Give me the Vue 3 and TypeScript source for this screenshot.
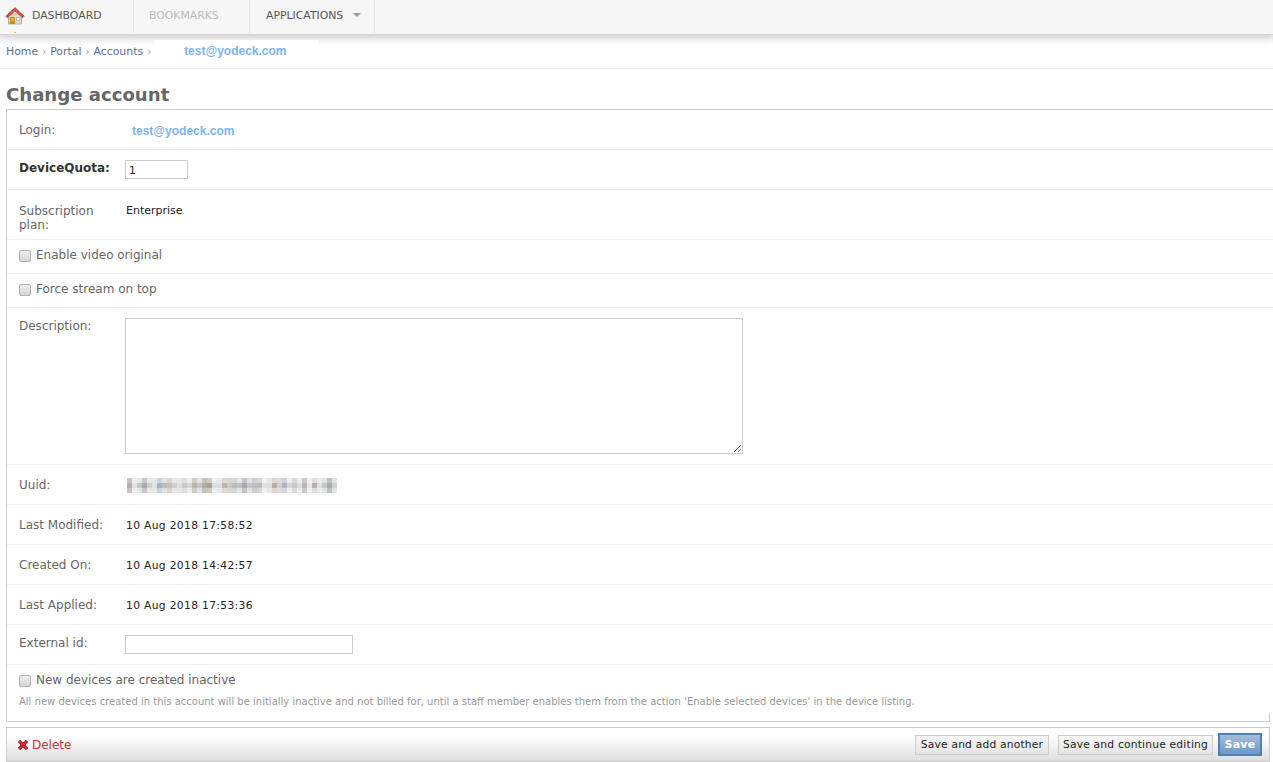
<script setup lang="ts">
const meta = [
  { label: 'Last Modified:', value: '10 Aug 2018 17:58:52' },
  { label: 'Created On:', value: '10 Aug 2018 14:42:57' },
  { label: 'Last Applied:', value: '10 Aug 2018 17:53:36' },
]

const mid = [
  '#b4afb3', '#e2e1e0', '#c4c8c8', '#a9adad', '#d2d2cc', '#dde1e3', '#a4b4c0', '#b9bdbf', '#c3c1bf', '#cfd0cd',
  '#dedddb', '#c9c9cb', '#d3d5d6', '#b9b6ae', '#c6c8c6', '#b2aca4', '#a9a79c', '#d8dee2', '#dde0e2', '#bfb4ab',
  '#cbc9c7', '#b9bbbe', '#c0c2c3', '#aaa6b2', '#c5c6c8', '#bcbfc1', '#b8bcbe', '#e0e0df', '#dcdddc', '#b7b2a4',
  '#d0cfd2', '#b4b2ba', '#d6d6d6', '#c7c8c9', '#dddcdb', '#bbb6b1', '#e4e5e5',
]

function lighten(hex: string, amount: number): string {
  const parts = [1, 3, 5].map((i) => parseInt(hex.slice(i, i + 2), 16))
  return `rgb(${parts.map((p) => Math.round(p + (255 - p) * amount)).join(',')})`
}

const cells = [0, 1, 2].flatMap((row) =>
  [...mid, ...mid.slice(0, 5)].map((c, i) =>
    row === 1 ? c : lighten(c, 0.25 + ((i * 7 + row * 5) % 5) * 0.08),
  ),
)
</script>

<template>
  <div class="page">
    <nav class="topbar">
      <div class="nav-item first">
        <svg class="home" width="20" height="20" viewBox="0 0 20 20">
          <rect x="3.5" y="8" width="13" height="10" fill="#dcdad6" stroke="#9a9a94" stroke-width=".7" />
          <path d="M0.8 10.2 10 1.5l9.2 8.7-1.6 1.6L10 5 2.4 11.8z" fill="#c8453c" stroke="#a5352d" stroke-width=".5" />
          <path d="M10 5 3.5 10.8V8.5L10 2.8l6.5 5.7v2.3z" fill="#d9584d" />
          <rect x="4.8" y="11" width="5" height="7" fill="#c98a1e" />
          <rect x="6" y="12.2" width="2.6" height="3" fill="#efb43a" />
          <rect x="11.5" y="11.5" width="3.4" height="3" fill="#f3f3f1" stroke="#a3a3a0" stroke-width=".6" />
        </svg>
        <span>DASHBOARD</span>
        <i class="dot"></i>
      </div>
      <div class="nav-item muted">BOOKMARKS</div>
      <div class="nav-item apps">APPLICATIONS<i class="caret"></i></div>
    </nav>

    <div class="crumbs">
      <a>Home</a><b>›</b><a>Portal</a><b>›</b><a>Accounts</a><b>›</b>
      <span class="crumb-patch"><span class="email">test@yodeck.com</span></span>
    </div>

    <h1>Change account</h1>

    <div class="card">
      <div class="row h40"><label>Login:</label><span class="email login">test@yodeck.com</span></div>
      <div class="row h40">
        <label class="strong with-input">DeviceQuota:</label>
        <input class="text quota" type="text" value="1" />
      </div>
      <div class="row plan">
        <label>Subscription plan:</label><span class="value">Enterprise</span>
      </div>
      <div class="row check"><input type="checkbox" class="cb" /><span>Enable video original</span></div>
      <div class="row check"><input type="checkbox" class="cb" /><span>Force stream on top</span></div>
      <div class="row desc">
        <label>Description:</label>
        <textarea class="area"></textarea>
      </div>
      <div class="row h40">
        <label>Uuid:</label>
        <div class="blur"><i v-for="(c, i) in cells" :key="i" :style="{ background: c }"></i></div>
      </div>
      <div v-for="m in meta" :key="m.label" class="row h40">
        <label>{{ m.label }}</label><span class="value date">{{ m.value }}</span>
      </div>
      <div class="row h40"><label class="with-input">External id:</label><input class="text ext" type="text" /></div>
      <div class="row inactive">
        <div class="inactive-line"><input type="checkbox" class="cb" /><span>New devices are created inactive</span></div>
        <p class="help">All new devices created in this account will be initially inactive and not billed for, until a staff member enables them from the action 'Enable selected devices' in the device listing.</p>
      </div>
    </div>

    <div class="actions">
      <a class="delete">
        <svg width="12" height="12" viewBox="0 0 12 12"><path d="M1.5 3 3 1.3 6 4l3-2.7L10.7 3 8 6l2.7 3-1.7 1.7L6 8l-3 2.7L1.3 9 4 6z" fill="#d9232b" stroke="#a91a20" stroke-width=".8" /></svg>
        Delete
      </a>
      <div class="buttons">
        <button class="btn add">Save and add another</button>
        <button class="btn cont">Save and continue editing</button>
        <button class="btn save">Save</button>
      </div>
    </div>
  </div>
</template>

<style>
html, body { margin: 0; background: #fff; overflow: hidden; }
</style>

<style scoped>
.page { width: 1273px; height: 762px; overflow: hidden; font-family: "DejaVu Sans", Verdana, sans-serif; font-size: 12px; color: #666; box-sizing: border-box; }
.topbar { height: 34px; display: flex; background: #f6f6f6; border-bottom: 1px solid #d5d5d5; box-shadow: 0 2px 8px rgba(0,0,0,.14); position: relative; font-size: 10.85px; color: #555; }
.nav-item { display: flex; align-items: center; border-right: 1px solid #e6e6e6; box-sizing: border-box; height: 33px; padding-bottom: 3px; }
.first { width: 134px; position: relative; padding-left: 5px; }
.home { margin-right: 7px; position: relative; top: 1px; }
.dot { position: absolute; left: 14px; top: 32px; width: 2px; height: 1px; background: #f2c200; }
.muted { width: 116px; padding-left: 15px; color: #bbb; }
.apps { width: 125px; padding-left: 16px; }
.caret { margin-left: 10px; border-style: solid; border-color: #999 transparent transparent; border-width: 4px 4px 0; }
.crumbs { height: 34px; box-sizing: border-box; display: flex; align-items: center; padding-left: 6px; padding-bottom: 1px; border-bottom: 1px solid #eaeaea; font-size: 10.9px; color: #5f6f8f; background: linear-gradient(#eeeeee, #fff 11px); }
.crumbs b { font-weight: 400; color: #999; margin: 0 4px; font-size: 10px; }
.crumb-patch { height: 22px; margin-left: 0; width: 164px; box-sizing: border-box; padding-left: 29px; background: #fff; display: flex; align-items: center; position: relative; z-index: 1; }
.email { font-family: "Liberation Sans", Arial, sans-serif; font-weight: 700; font-size: 12px; color: #7db4ee; }
h1 { margin: 14px 0 0 6px; height: 26px; font-size: 18.1px; line-height: 24px; font-weight: 700; color: #666; }
.card { margin-left: 6px; border: 1px solid #ccc; border-width: 1px 0 0 1px; box-sizing: border-box; height: 613px; position: relative; }
.card::after { content: ""; position: absolute; left: -1px; right: 3px; bottom: 0; height: 9px; border-bottom: 1px solid #ccc; border-right: 1px solid #ccc; border-left: 1px solid #ccc; box-sizing: border-box; pointer-events: none; }
.row { display: flex; box-sizing: border-box; border-bottom: 1px solid #eee; padding-left: 12px; }
.row > label { width: 106px; flex: none; line-height: 14px; }
.h40 { height: 40px; align-items: center; padding-bottom: 1px; }
.h40 > label { position: relative; top: 1px; }
.h40 > label.with-input { top: -1px; }
.strong { font-weight: 700; color: #333; }
.value { color: #222; font-size: 11px; position: relative; left: 1px; }
.h40 .value { top: 1px; }
.date { font-size: 10.7px; letter-spacing: .35px; }
.login { position: relative; left: 7px; top: 2px; }
.text { height: 19px; box-sizing: border-box; border: 1px solid #ccc; padding: 2px 3px 0; margin: 0; font: 10.7px "DejaVu Sans", sans-serif; color: #222; background: #fff; outline: 0; border-radius: 0; }
.quota { width: 63px; }
.ext { width: 228px; }
.plan { height: 50px; padding-top: 13px; align-items: flex-start; }
.plan > label { line-height: 13.5px; position: relative; top: 2px; }
.plan .value { top: 1px; }
.check { height: 34px; align-items: center; padding-bottom: 4px; }
.cb { appearance: none; width: 12px; height: 12px; margin: 0 5px 0 0; border: 1px solid #b2b2b2; border-radius: 2px; background: linear-gradient(#eeeeee, #d4d4d4); flex: none; position: relative; top: 1px; }
.desc { height: 157px; padding-top: 10px; }
.desc > label { padding-top: 1px; }
.area { width: 618px; height: 136px; box-sizing: border-box; border: 1px solid #ccc; margin: 0; padding: 0; border-radius: 0; outline: 0; }
.blur { display: grid; grid-template-columns: repeat(42, 5px); grid-auto-rows: 5px; margin-left: 2px; position: relative; top: 1px; }
.blur i { display: block; }
.inactive { display: block; border-bottom: 0; height: 56px; padding-top: 7px; }
.inactive-line { display: flex; align-items: center; height: 15px; }
.help { margin: 9px 0 0; font-size: 10px; color: #999; line-height: 12px; white-space: nowrap; }
.actions { margin: 5px 3px 0 6px; height: 35px; box-sizing: border-box; border: 1px solid #ccc; display: flex; align-items: center; justify-content: space-between; padding: 0 7px 0 10px; background: linear-gradient(#fff 0%, #fff 25%, #dedede 100%); }
.delete { display: flex; align-items: center; gap: 3px; color: #c8333a; }
.buttons { display: flex; gap: 9px; align-items: center; }
.btn { height: 20px; padding: 0; box-sizing: border-box; border: 1px solid #ccc; background: linear-gradient(#f8f8f8, #e4e4e4); font: 10.7px "DejaVu Sans", sans-serif; color: #222; border-radius: 0; letter-spacing: .2px; }
.add { width: 134px; }
.cont { width: 155px; }
.save { height: 23px; width: 44px; margin-left: -4px; border: 2px solid #4f7fb5; background: linear-gradient(#a3bddb, #6f98c6); color: #fff; font-weight: 700; font-size: 11px; padding: 0; }
</style>
